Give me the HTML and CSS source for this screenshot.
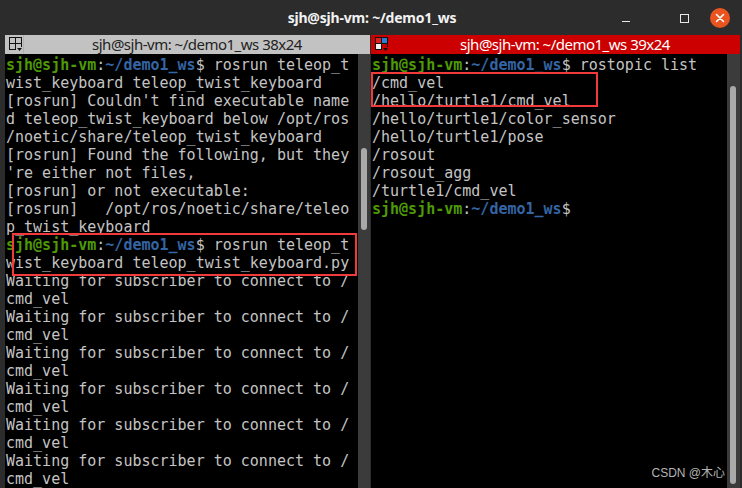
FILE: index.html
```html
<!DOCTYPE html>
<html>
<head>
<meta charset="utf-8">
<link rel="stylesheet" href="styles.css">
</head>
<body>
<div class="window">
  <div class="titlebar">
    <div class="title">sjh@sjh-vm: ~/demo1_ws</div>
    <div class="controls">
      <span class="btn-min"></span>
      <span class="btn-max"></span>
      <span class="btn-close">
        <svg width="20" height="20" viewBox="0 0 20 20"><circle cx="10" cy="10" r="10" fill="#e95420"/><path d="M6.5 6.5 L13.5 13.5 M13.5 6.5 L6.5 13.5" stroke="#fff" stroke-width="1.6" stroke-linecap="round"/></svg>
      </span>
    </div>
  </div>
  <div class="panes">
    <div class="pane pane-left">
      <div class="phead phead-left">
        <div class="picon">
          <svg width="14" height="15" viewBox="0 0 14 15"><rect x="0.5" y="0.5" width="6" height="6" fill="none" stroke="#111"/><rect x="6.5" y="0.5" width="6" height="6" fill="none" stroke="#111"/><rect x="0.5" y="6.5" width="6" height="6" fill="none" stroke="#111"/><rect x="6.5" y="6.5" width="6" height="6" fill="none" stroke="#111"/><rect x="7" y="10" width="7" height="5" fill="#c2c2c2"/><path d="M8 11 L13 11 L10.5 14 Z" fill="#111"/></svg>
        </div>
        <div class="ptitle">sjh@sjh-vm: ~/demo1_ws 38x24</div>
      </div>
      <div class="pbody">
        <div class="term">
          <div class="ln"><span class="pu">sjh@sjh-vm</span>:<span class="pp">~/demo1_ws</span>$ rosrun teleop_t</div>
          <div class="ln">wist_keyboard teleop_twist_keyboard</div>
          <div class="ln">[rosrun] Couldn't find executable name</div>
          <div class="ln">d teleop_twist_keyboard below /opt/ros</div>
          <div class="ln">/noetic/share/teleop_twist_keyboard</div>
          <div class="ln">[rosrun] Found the following, but they</div>
          <div class="ln">'re either not files,</div>
          <div class="ln">[rosrun] or not executable:</div>
          <div class="ln">[rosrun]   /opt/ros/noetic/share/teleo</div>
          <div class="ln">p_twist_keyboard</div>
          <div class="ln"><span class="pu">sjh@sjh-vm</span>:<span class="pp">~/demo1_ws</span>$ rosrun teleop_t</div>
          <div class="ln">wist_keyboard teleop_twist_keyboard.py</div>
          <div class="ln">Waiting for subscriber to connect to /</div>
          <div class="ln">cmd_vel</div>
          <div class="ln">Waiting for subscriber to connect to /</div>
          <div class="ln">cmd_vel</div>
          <div class="ln">Waiting for subscriber to connect to /</div>
          <div class="ln">cmd_vel</div>
          <div class="ln">Waiting for subscriber to connect to /</div>
          <div class="ln">cmd_vel</div>
          <div class="ln">Waiting for subscriber to connect to /</div>
          <div class="ln">cmd_vel</div>
          <div class="ln">Waiting for subscriber to connect to /</div>
          <div class="ln">cmd_vel</div>
          <div class="mark mark-left"></div>
        </div>
        <div class="sbar"><div class="thumb thumb-left"></div></div>
      </div>
    </div>
    <div class="pane pane-right">
      <div class="phead phead-right">
        <div class="picon picon-red">
          <svg width="14" height="15" viewBox="0 0 14 15"><rect x="0" y="0" width="13" height="13" fill="#111"/><rect x="1" y="1" width="5" height="5" fill="#e02020"/><rect x="7" y="1" width="5" height="5" fill="#2a7fd4"/><rect x="1" y="7" width="5" height="5" fill="#f0f0f0"/><rect x="7" y="7" width="5" height="5" fill="#cc0000"/><rect x="7" y="10" width="7" height="5" fill="#cc0000"/><path d="M8 11 L13 11 L10.5 14 Z" fill="#111"/></svg>
        </div>
        <div class="ptitle">sjh@sjh-vm: ~/demo1_ws 39x24</div>
      </div>
      <div class="pbody">
        <div class="term">
          <div class="ln"><span class="pu">sjh@sjh-vm</span>:<span class="pp">~/demo1_ws</span>$ rostopic list</div>
          <div class="ln">/cmd_vel</div>
          <div class="ln">/hello/turtle1/cmd_vel</div>
          <div class="ln">/hello/turtle1/color_sensor</div>
          <div class="ln">/hello/turtle1/pose</div>
          <div class="ln">/rosout</div>
          <div class="ln">/rosout_agg</div>
          <div class="ln">/turtle1/cmd_vel</div>
          <div class="ln"><span class="pu">sjh@sjh-vm</span>:<span class="pp">~/demo1_ws</span>$ </div>
          <div class="mark mark-right"></div>
          <div class="watermark">CSDN @木心</div>
        </div>
        <div class="sbar sbar-right"><div class="thumb thumb-right"></div></div>
      </div>
    </div>
  </div>
</div>
</body>
</html>
```

FILE: styles.css
```css
html, body {
  margin: 0;
  padding: 0;
  background: #000;
}
.window {
  width: 742px;
  height: 488px;
  display: flex;
  flex-direction: column;
  background: #2c2c2c;
  overflow: hidden;
}
.titlebar {
  height: 35px;
  flex: 0 0 35px;
  position: relative;
  display: flex;
  align-items: center;
  justify-content: center;
  background: #2c2c2c;
}
.title {
  font-family: "Noto Sans", "Open Sans", sans-serif;
  font-weight: bold;
  font-size: 14px;
  color: #f2f2f2;
  letter-spacing: -0.2px;
  margin-left: 2px;
}
.controls {
  position: absolute;
  right: 12px;
  top: 8px;
  display: flex;
  align-items: center;
  height: 20px;
}
.btn-min {
  width: 8px;
  height: 1px;
  background: #e8e8e8;
  margin-right: 50px;
  margin-top: 6px;
}
.btn-max {
  width: 7px;
  height: 7px;
  border: 1px solid #e8e8e8;
  margin-right: 21px;
}
.btn-close {
  width: 20px;
  height: 20px;
  display: block;
}
.btn-close svg { display: block; }

.panes {
  flex: 1;
  display: flex;
  padding: 0 2px 0 5px;
  gap: 1px;
  background: #2c2c2c;
  min-height: 0;
}
.pane {
  display: flex;
  flex-direction: column;
  min-height: 0;
}
.pane-left { width: 365px; }
.pane-right { flex: 1; }
.phead {
  height: 19px;
  flex: 0 0 19px;
  display: flex;
  align-items: center;
}
.phead-left { background: #c2c2c2; color: #222; }
.phead-right { background: #cc0000; color: #fff; }
.picon {
  width: 19px;
  height: 19px;
  display: flex;
  align-items: center;
  box-sizing: border-box;
  padding-left: 4px;
  border-right: 1px solid #b2b2b2;
}
.picon-red { border-right: none; }
.picon svg { display: block; }
.ptitle {
  flex: 1;
  text-align: center;
  font-family: "Noto Sans", "Open Sans", sans-serif;
  font-size: 15px;
  letter-spacing: -0.5px;
  line-height: 19px;
  white-space: nowrap;
}
.pbody {
  flex: 1;
  display: flex;
  background: #000;
  min-height: 0;
}
.term {
  flex: 1;
  position: relative;
  padding: 2px 0 0 1px;
  font-family: "DejaVu Sans Mono", "Liberation Mono", monospace;
  font-size: 15px;
  line-height: 18px;
  color: #c4c4c4;
  overflow: hidden;
}
.ln { height: 18px; white-space: pre; }
.pu { color: #4e9a06; font-weight: bold; }
.pp { color: #3465a4; font-weight: bold; }
.sbar {
  width: 12px;
  background: #3b3b3b;
  position: relative;
}
.sbar-right { width: 13px; }
.thumb {
  position: absolute;
  left: 3px;
  width: 6px;
  border-radius: 3px;
  background: #a9a9a9;
}
.thumb-left { top: 94px; height: 82px; }
.thumb-right { top: 32px; height: 398px; left: 3px; }
.mark {
  position: absolute;
  border: 2px solid #f23a3a;
}
.mark-left { left: 7px; top: 179px; width: 341px; height: 39px; }
.mark-right { left: 0px; top: 18px; width: 223px; height: 31px; }
.watermark {
  position: absolute;
  right: 2px;
  bottom: 8px;
  font-family: "Liberation Sans", "Noto Sans CJK SC", sans-serif;
  font-size: 12px;
  line-height: 14px;
  color: #b4b4b4;
  white-space: nowrap;
}
```
